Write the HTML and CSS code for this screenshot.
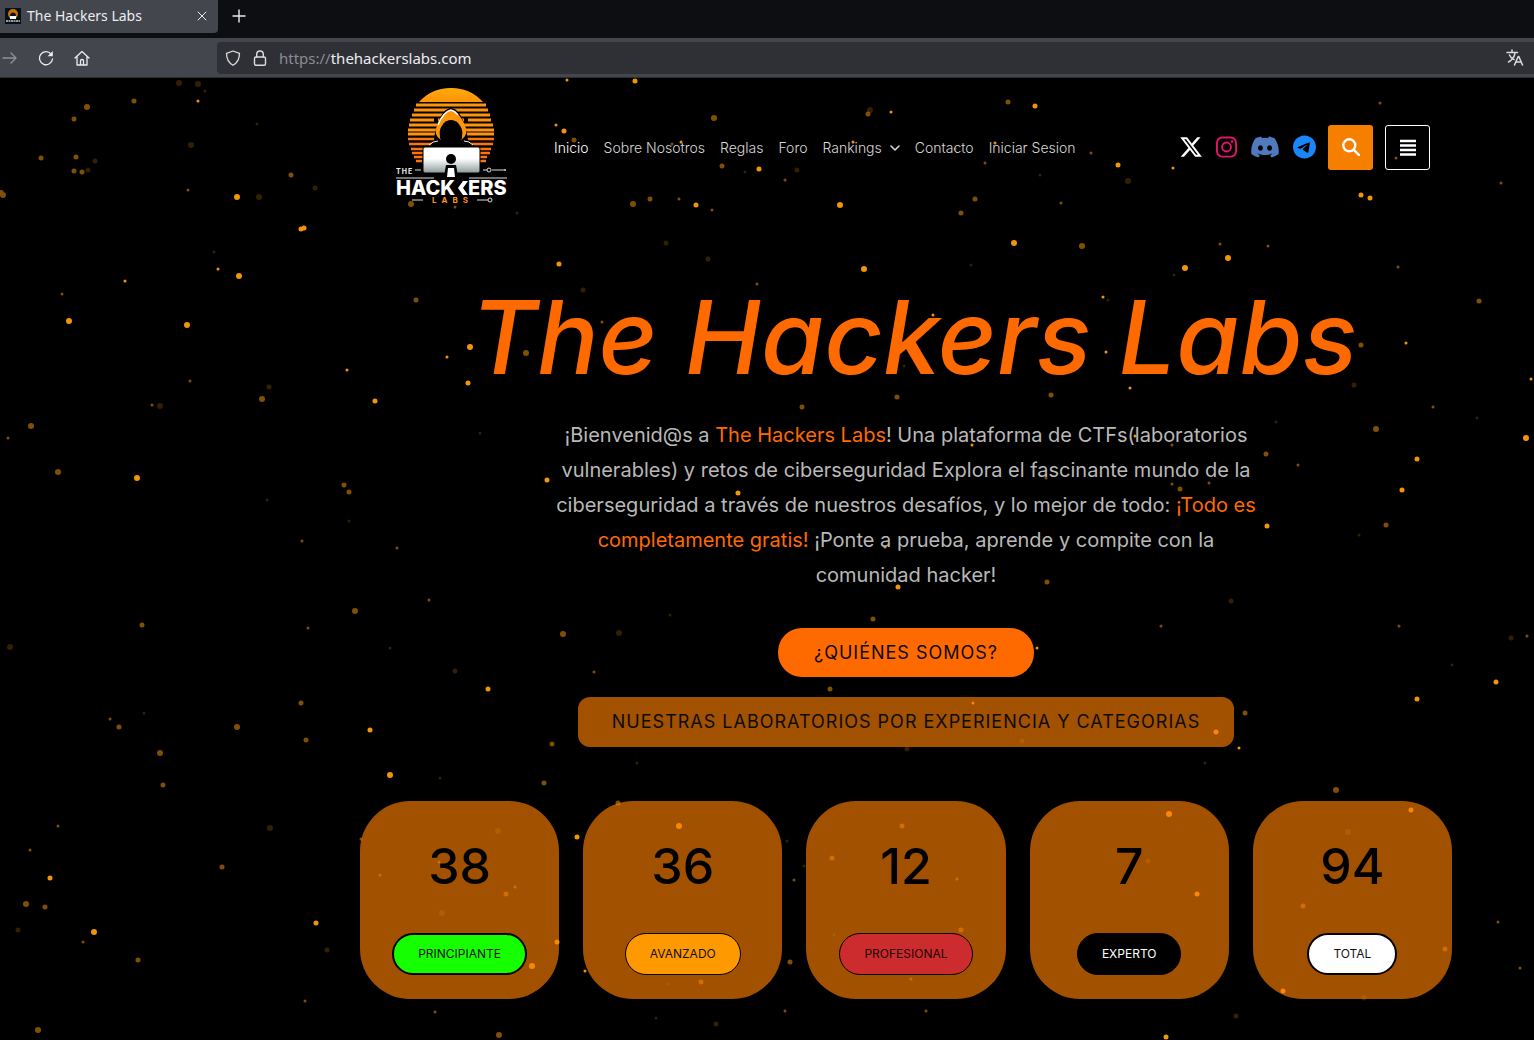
FILE: index.html
```html
<!DOCTYPE html>
<html lang="es">
<head>
<meta charset="utf-8">
<meta name="viewport" content="width=device-width, initial-scale=1">
<title>The Hackers Labs</title>
<link rel="stylesheet" href="styles.css">
</head>
<body>
<svg width="0" height="0" class="defs" aria-hidden="true">
  <defs>
    <linearGradient id="sun" x1="0" y1="0" x2="0" y2="1"><stop offset="0" stop-color="#ffa90a"/><stop offset="1" stop-color="#ff9408"/></linearGradient>
    <linearGradient id="lid" x1="0" y1="0" x2="0" y2="1"><stop offset=".45" stop-color="#fff"/><stop offset="1" stop-color="#8d9a9a"/></linearGradient>
  </defs>
</svg>

<div class="browser">
  <div class="tabs">
    <div class="tab">
      <svg class="favicon" viewBox="0 0 16 16" aria-hidden="true"><rect width="16" height="16" fill="#05121b"/><circle cx="8" cy="6" r="5" fill="#c87300"/><path d="M5 8a3 3.500 0 0 1 6 0v3H5z" fill="#111"/><path d="M5 8h6v3H5z" fill="#fff"/><path d="M1 13h14" stroke="#999" stroke-width="2" stroke-dasharray="2 .5"/></svg>
      <span class="tab-title">The Hackers Labs</span>
      <button class="chrome-btn" aria-label="Cerrar pestaña"><svg width="10" height="10" viewBox="0 0 10 10" class="line"><path d="M1 1l8 8M9 1L1 9"/></svg></button>
    </div>
    <button class="chrome-btn new-tab" aria-label="Nueva pestaña"><svg width="14" height="14" viewBox="0 0 14 14" class="line"><path d="M7 1v12M1 7h12" stroke-width="1.4"/></svg></button>
  </div>
  <div class="toolbar">
    <div class="tools">
      <button class="chrome-btn off" aria-label="Adelante"><svg width="16" height="16" viewBox="0 0 16 16" class="line"><path d="M1 8h13M9 3l5 5-5 5" stroke-width="1.4"/></svg></button>
      <button class="chrome-btn" aria-label="Recargar"><svg width="16" height="16" viewBox="0 0 16 16" class="line"><path d="M13 4A6.500 6.500 0 1 0 14.500 9" stroke-width="1.3"/><path d="M14.800 1v5.200H9.600z" fill="currentColor" stroke="none"/></svg></button>
      <button class="chrome-btn" aria-label="Inicio"><svg width="16" height="16" viewBox="0 0 16 16" class="line"><path d="M1 8l7-6.500L15 8M3 6.500V15h10V6.500M6.500 15v-4q0-1.500 1.500-1.500T9.500 11v4" stroke-width="1.3"/></svg></button>
    </div>
    <div class="address">
      <svg width="16" height="16" viewBox="0 0 16 16" class="line" aria-hidden="true"><path d="M8 1l6.500 2.300c0 5.500-1.500 9.200-6.500 12C3 12.500 1.500 8.800 1.500 3.300z" stroke-width="1.3"/></svg>
      <svg width="16" height="16" viewBox="0 0 16 16" class="line" aria-hidden="true"><rect x="2.500" y="7" width="11" height="8.300" rx="1.500" stroke-width="1.4"/><path d="M4.700 7V4.300a3.300 3.300 0 0 1 6.600 0V7" stroke-width="1.4"/></svg>
      <div class="url" role="textbox" aria-label="Dirección"><span class="scheme">https://</span>thehackerslabs.com</div>
      <button class="chrome-btn" aria-label="Traducir"><svg width="18" height="18" viewBox="0 0 18 18" class="line"><path d="M1 3.500h10.500M6 1v2.500M2.500 13C6 11 8.700 8 9 3.500M3.500 6C4.500 8.500 6 9.800 8 10.500M8.500 16l3.700-8.500h.6L16.500 16M10 13h5" stroke-width="1.5"/></svg></button>
    </div>
  </div>
</div>

<div class="page">
  <svg class="particles" viewBox="0 78 1534 962" aria-hidden="true">
    <path class="s dim" d="M205 91h0M257 124h0M214 252h0M480 433h0M267 500h0M349 521h0M144 713h0M390 648h0M440 778h0M637 763h0M1205 763h0M670 615h0M745 172h0M1040 175h0M1174 275h0M1108 300h0M1276 422h0M1477 418h0M1359 535h0M1452 665h0M787 841h0M804 866h0M834 935h0M668 984h0M517 213h0M971 265h0M904 366h0M656 1018h0"/>
    <path class="s mid" d="M188 190h0M62 294h0M152 405h0M8 438h0M302 541h0M397 548h0M308 628h0M58 826h0M110 719h0M30 850h0M83 942h0M305 1001h0M435 1012h0M190 381h0M429 600h0M594 672h0M1161 626h0M1061 203h0M1501 183h0M1398 267h0M1220 244h0M1268 246h0M1433 407h0M1172 445h0M1298 465h0M1209 483h0M1172 484h0M1046 478h0M1399 626h0M1527 636h0M380 875h0M515 887h0M957 879h0M794 880h0M911 979h0M785 1011h0M926 1011h0M757 284h0M602 322h0M672 144h0M1091 153h0M985 163h0M785 180h0M712 210h0M1380 103h0M955 149h0M1520 968h0M1498 922h0M1396 158h0M679 199h0M361 839h0M439 862h0M455 207h0"/>
    <path class="s hi" d="M567 80h0M556 125h0M681 142h0M853 142h0M995 143h0M891 112h0M218 269h0M125 281h0M198 101h0M347 370h0M933 315h0M1103 297h0M1106 352h0M1406 343h0M1130 388h0M1531 379h0M972 445h0M1135 436h0M1037 648h0M1239 748h0M973 703h0M585 971h0M885 547h0M447 357h0M1173 168h0"/>
    <path class="m dim" d="M95 161h0M88 170h0M315 188h0M269 387h0M455 671h0M327 950h0M666 243h0M708 259h0M797 170h0M583 290h0M1354 385h0M1511 638h0M1231 601h0M907 749h0M1022 741h0M1364 998h0M1148 861h0M716 1024h0M18 930h0M1236 1016h0"/>
    <path class="m mid" d="M74 119h0M134 101h0M41 158h0M76 157h0M82 172h0M74 171h0M291 175h0M349 492h0M344 485h0M142 625h0M301 703h0M163 785h0M222 867h0M45 907h0M138 960h0M119 727h0M574 140h0M722 166h0M650 199h0M961 213h0M975 199h0M897 397h0M802 407h0M1051 395h0M416 300h0M1479 301h0M1386 525h0M873 619h0M1047 582h0M1245 713h0M830 689h0M544 783h0M552 744h0M618 803h0M701 982h0M506 894h0M832 858h0M902 826h0M1303 906h0M1445 949h0M961 930h0M790 962h0M1266 454h0M1180 489h0M1361 345h0M868 114h0M1008 102h0M306 740h0"/>
    <path class="m hi" d="M301 229h0M304 228h0M564 131h0M759 169h0M635 81h0M696 205h0M559 264h0M1035 106h0M1361 195h0M1370 198h0M1417 459h0M1402 490h0M1267 526h0M1417 699h0M1496 682h0M375 401h0M468 383h0M488 689h0M370 730h0M50 878h0M316 923h0M577 837h0M557 942h0M1216 732h0M738 493h0M547 480h0M898 587h0M1411 810h0M1197 894h0M1283 991h0M1118 165h0M1166 1037h0"/>
    <path class="l dim" d="M179 83h0M198 84h0M191 145h0M259 197h0M160 406h0M270 828h0M10 647h0M619 633h0M498 831h0M1348 832h0M442 913h0M1128 181h0M870 110h0"/>
    <path class="l mid" d="M87 107h0M1 193h0M3 195h0M31 426h0M58 472h0M262 399h0M160 753h0M237 727h0M26 904h0M38 1030h0M355 611h0M563 634h0M499 1035h0M714 118h0M1082 246h0M1376 429h0M1336 790h0M526 353h0M633 204h0M411 204h0"/>
    <path class="l hi" d="M237 197h0M239 276h0M69 321h0M187 325h0M137 478h0M470 347h0M390 775h0M94 932h0M840 205h0M864 269h0M1014 243h0M1185 268h0M1228 258h0M1526 438h0M679 826h0M532 966h0M1169 814h0"/>
  </svg>

  <header class="site-header">
    <a class="logo" href="#" aria-label="The Hackers Labs">
      <svg width="112" height="120" viewBox="0 0 112 120">
        <path fill="url(#sun)" d="M55 0A43 43 0 0 1 87 14H23A43 43 0 0 1 55 0z"/>
        <path d="M20 17h70M18 22h74M16 27h78M14 32h24M42 32h26M72 32h23M13 37h84M12 42h86M12 46h86" stroke="#ff930b" stroke-width="3"/>
        <path d="M12 51h86M13 56h84M15 61h18M77 61h18M16 65h16M79 65h15M18 69h10M83 69h8M20 73h6M84 73h6" stroke="#ff740a" stroke-width="2.500"/>
        <path d="M31 61l7-8h35l8 8v8H31z"/>
        <path d="M38 52C40 35 47 20 55 20s15 15 17 32l4 8H34z"/>
        <path d="M45 52q-8-5-4-15Q47 24 55 22q8 2 14 15 4 10-4 15 3-10-1-14-9-11-18 0-4 4-1 14z" fill="#ff950b"/>
        <path d="M42 37Q47 24 55 22q4 1 7 5" fill="none" stroke="#fff" stroke-width="1.500"/>
        <path d="M55 32c-8 0-12 9-11 18l4 6h14l4-6c1-9-3-18-11-18z"/>
        <path d="M33 57q4-4 9-4M77 57q-4-4-9-4" fill="none" stroke="#eee" stroke-width="1"/>
        <rect x="27" y="59" width="57" height="26" rx="2" fill="url(#lid)" stroke="#000"/>
        <circle cx="55" cy="71" r="5"/><path d="M48 88l2-11h10l2 11z"/><path d="M51 89l1-9h6l1 9z" fill="#fff"/>
        <path d="M19 82h6M87 82h4M96 82h12M0 90h38M73 90h38M16 112h11M81 112h11" stroke="#ddd"/>
        <circle cx="93" cy="82" r="2" fill="none" stroke="#ddd"/><circle cx="109" cy="82" r="1" fill="#ddd"/><circle cx="94" cy="112" r="2" fill="none" stroke="#ddd"/>
        <text class="logo-the" x="0" y="86">THE</text>
        <text class="logo-name" x="0" y="107">HACK</text>
        <path d="M72 93h-5l-5 7 5 7h5l-5-7z" fill="#fff"/>
        <text class="logo-name" x="72" y="107">ERS</text>
        <text class="logo-labs" x="36" y="115">LABS</text>
      </svg>
    </a>
    <nav class="nav" aria-label="Principal">
      <a href="#" class="active">Inicio</a>
      <a href="#">Sobre Nosotros</a>
      <a href="#">Reglas</a>
      <a href="#">Foro</a>
      <a href="#">Rankings<svg width="10" height="6" viewBox="0 0 10 6" class="line"><path d="M1 1l4 4 4-4" stroke-width="1.6"/></svg></a>
      <a href="#">Contacto</a>
      <a href="#">Iniciar Sesion</a>
    </nav>
    <div class="actions">
      <div class="socials">
        <a class="x" href="#" aria-label="X"><svg width="24" height="24" viewBox="0 0 512 512"><path d="M389.200 48h70.600L305.600 224.200 487 464H345L233.700 318.600 106.500 464H35.800L200.700 275.500 26.800 48H172.400L272.900 180.900 389.200 48zM364.400 421.800h39.100L151.100 88h-42L364.400 421.800z"/></svg></a>
        <a class="instagram" href="#" aria-label="Instagram"><svg width="21" height="24" viewBox="0 0 448 512"><g fill="none" stroke="currentColor" stroke-width="40"><rect x="20" y="52" width="408" height="408" rx="112"/><circle cx="224" cy="256" r="95"/></g><circle cx="343" cy="137" r="27"/></svg></a>
        <a class="discord" href="#" aria-label="Discord"><svg width="30" height="24" viewBox="0 0 640 512"><path d="M524.531,69.836a1.500,1.500,0,0,0-.764-.7A485.065,485.065,0,0,0,404.081,32.030a1.816,1.816,0,0,0-1.923.910,337.461,337.461,0,0,0-14.900,30.600,447.848,447.848,0,0,0-134.426,0,309.541,309.541,0,0,0-15.135-30.600,1.890,1.890,0,0,0-1.924-.910A483.689,483.689,0,0,0,116.085,69.137a1.712,1.712,0,0,0-.788.676C39.068,183.651,18.186,294.690,28.430,404.354a2.016,2.016,0,0,0,.765,1.375A487.666,487.666,0,0,0,176.020,479.918a1.900,1.900,0,0,0,2.063-.676A348.200,348.200,0,0,0,208.120,430.400a1.860,1.860,0,0,0-1.019-2.588,321.173,321.173,0,0,1-45.868-21.853,1.885,1.885,0,0,1-.185-3.126c3.082-2.309,6.166-4.711,9.109-7.137a1.819,1.819,0,0,1,1.900-.256c96.229,43.917,200.410,43.917,295.500,0a1.812,1.812,0,0,1,1.924.233c2.944,2.426,6.027,4.851,9.132,7.160a1.884,1.884,0,0,1-.162,3.126,301.407,301.407,0,0,1-45.890,21.830,1.875,1.875,0,0,0-1,2.611,391.055,391.055,0,0,0,30.014,48.815,1.864,1.864,0,0,0,2.063.7A486.048,486.048,0,0,0,610.700,405.729a1.882,1.882,0,0,0,.765-1.352C623.729,277.594,590.933,167.465,524.531,69.836ZM222.491,337.580c-28.972,0-52.844-26.587-52.844-59.239S193.056,219.100,222.491,219.100c29.665,0,53.306,26.820,52.843,59.239C275.334,310.993,251.924,337.580,222.491,337.580Zm195.380,0c-28.971,0-52.843-26.587-52.843-59.239S388.437,219.100,417.871,219.100c29.667,0,53.307,26.820,52.844,59.239C470.715,310.993,447.538,337.580,417.871,337.580Z"/></svg></a>
        <a class="telegram" href="#" aria-label="Telegram"><svg width="23" height="24" viewBox="0 0 496 512"><path d="M248,8C111.033,8,0,119.033,0,256S111.033,504,248,504,496,392.967,496,256,384.967,8,248,8ZM362.952,176.660c-3.732,39.215-19.881,134.378-28.100,178.300-3.476,18.584-10.322,24.816-16.948,25.425-14.400,1.326-25.338-9.517-39.287-18.661-21.827-14.308-34.158-23.215-55.346-37.177-24.485-16.135-8.612-25,5.342-39.500,3.652-3.793,67.107-61.510,68.335-66.746.153-.655.3-3.100-1.154-4.384s-3.590-.849-5.135-.5q-3.283.746-104.608,69.142-14.845,10.194-26.894,9.934c-8.855-.191-25.888-5.006-38.551-9.123-15.531-5.048-27.875-7.717-26.800-16.291q.84-6.700,18.450-13.700,108.446-47.248,144.628-62.300c68.872-28.647,83.183-33.623,92.511-33.789,2.052-.034,6.639.474,9.610,2.885a10.452,10.452,0,0,1,3.530,6.716A43.765,43.765,0,0,1,362.952,176.660Z"/></svg></a>
      </div>
      <button class="square search" aria-label="Buscar"><svg width="18" height="18" viewBox="0 0 18 18"><g fill="none" stroke="currentColor" stroke-width="2.400" stroke-linecap="round"><circle cx="7.300" cy="7.300" r="6"/><path d="M11.800 11.800l5 5"/></g></svg></button>
      <button class="square menu" aria-label="Menú"><svg width="16" height="17" viewBox="0 0 16 17"><path d="M0 2h16M0 6.500h16M0 11h16M0 15.500h16" stroke="currentColor" stroke-width="2.400"/></svg></button>
    </div>
  </header>

  <main class="hero">
    <h1>The Hackers Labs</h1>
    <p class="intro">¡Bienvenid@s a <strong>The Hackers Labs</strong>! Una plataforma de CTFs(laboratorios vulnerables) y retos de ciberseguridad Explora el fascinante mundo de la ciberseguridad a través de nuestros desafíos, y lo mejor de todo: <strong>¡Todo es completamente gratis!</strong> ¡Ponte a prueba, aprende y compite con la comunidad hacker!</p>
    <a class="cta about" href="#">¿QUIÉNES SOMOS?</a>
    <a class="cta labs" href="#">NUESTRAS LABORATORIOS POR EXPERIENCIA Y CATEGORIAS</a>
    <section class="levels" aria-label="Laboratorios por nivel">
      <article class="level"><span class="count">38</span><a class="pill beginner" href="#">PRINCIPIANTE</a></article>
      <article class="level"><span class="count">36</span><a class="pill advanced" href="#">AVANZADO</a></article>
      <article class="level"><span class="count">12</span><a class="pill pro" href="#">PROFESIONAL</a></article>
      <article class="level"><span class="count">7</span><a class="pill expert" href="#">EXPERTO</a></article>
      <article class="level"><span class="count">94</span><a class="pill total" href="#">TOTAL</a></article>
    </section>
  </main>
</div>
</body>
</html>
```

FILE: styles.css
```css
* { box-sizing: border-box; }

body {
  margin: 0;
  min-height: 100vh;
  display: flex;
  flex-direction: column;
  background: #000;
  color: #fff;
  font-family: Inter, "Liberation Sans", sans-serif;
}

a { color: inherit; text-decoration: none; }
button { padding: 0; border: 0; background: none; color: inherit; font: inherit; }
svg { display: block; flex: none; fill: currentColor; }
.defs { position: absolute; }
.line { fill: none; stroke: currentColor; stroke-linecap: round; stroke-linejoin: round; }

/* Browser chrome */
.browser { color: #ececf0; font-family: "Noto Sans", sans-serif; }
.tabs { display: flex; align-items: flex-start; height: 38px; background: #0c0e12; }
.tab {
  display: flex;
  align-items: center;
  gap: 6px;
  width: 218px;
  height: 33px;
  padding: 0 11px 2px 5px;
  border-radius: 0 0 4px 0;
  background: #43464d;
  font-size: 14px;
}
.favicon { width: 16px; height: 16px; }
.tab-title { flex: 1; }
.chrome-btn { display: grid; place-items: center; }
.new-tab { width: 42px; height: 31px; }
.toolbar { display: flex; align-items: center; height: 40px; background: #43464d; border-bottom: 1px solid #2a2c31; }
.tools { display: flex; gap: 20px; width: 217px; padding-left: 2px; }
.off { opacity: .45; }
.address {
  flex: 1;
  display: flex;
  align-items: center;
  gap: 11px;
  height: 32px;
  padding: 0 10px 0 8px;
  border-radius: 4px 0 0 4px;
  background: #2f3036;
}
.url { flex: 1; font-size: 15px; }
.address .line { color: #dcdce0; }
.scheme { color: #8b8c92; }

/* Page */
.page { position: relative; flex: 1; padding-left: 278px; overflow: hidden; }
.particles {
  position: absolute;
  top: 0;
  left: 0;
  width: 100%;
  fill: none;
  stroke: #ff9d0a;
  stroke-linecap: round;
}
.s { stroke-width: 3px; }
.m { stroke-width: 5px; }
.l { stroke-width: 6px; }
.dim { stroke-opacity: .2; }
.mid { stroke-opacity: .5; }
.hi { stroke-opacity: .95; }

.site-header {
  position: relative;
  display: flex;
  align-items: center;
  max-width: 1048px;
  height: 138px;
  margin: 0 auto;
  padding-left: 14px;
}
.logo { margin-top: 2px; }
.logo svg { fill: #000; }
.logo-the { font-size: 7px; font-weight: 700; letter-spacing: 1px; fill: #eee; }
.logo-name { font-size: 20px; font-weight: 800; fill: #fff; }
.logo-labs { font-size: 8px; font-weight: 700; letter-spacing: 5px; fill: #f7931e; }

.nav {
  display: flex;
  gap: 15px;
  margin: 2px 0 0 46px;
  color: #d8d8d8;
  font-size: 14px;
  font-weight: 300;
  line-height: 20px;
  white-space: nowrap;
}
.nav a { display: flex; align-items: center; gap: 8px; }
.nav .active { color: #fff; }

.actions { display: flex; align-items: center; gap: 12px; margin-left: auto; }
.socials { display: flex; gap: 13px; }
.x { color: #fff; }
.instagram { color: #e4156b; }
.discord { color: #5179bd; }
.telegram { color: #1a86fb; }
.square { display: grid; place-items: center; width: 45px; height: 45px; border-radius: 3px; }
.search { background: #f77f00; }
.menu { border: 1px solid #fff; }

.hero {
  position: relative;
  display: flex;
  flex-direction: column;
  align-items: center;
  max-width: 1092px;
  margin: 0 auto;
  padding: 56px 0 40px;
}
h1 {
  margin: 0;
  padding-left: 16px;
  color: #ff6a00;
  font-size: 102px;
  font-style: italic;
  font-weight: 500;
  line-height: 130px;
  white-space: nowrap;
}
.intro {
  max-width: 704px;
  margin: 16px 0 35px;
  color: #b9b9b9;
  font-size: 20px;
  line-height: 35px;
  text-align: center;
}
.intro strong { color: #ff6a00; font-weight: 400; }

.cta {
  padding: 0 36px;
  color: #0c0c0c;
  font-size: 18px;
  line-height: 49px;
  letter-spacing: 1px;
}
.about { margin-bottom: 20px; border-radius: 24px; background: #ff6a00; }
.labs { padding: 0 34px; border-radius: 12px; background: rgba(255, 128, 0, .635); line-height: 50px; }

.levels {
  display: grid;
  grid-template-columns: repeat(5, 1fr);
  gap: 24px;
  width: 100%;
  margin-top: 54px;
}
.level {
  display: flex;
  flex-direction: column;
  align-items: center;
  gap: 38px;
  padding: 36px 0 24px;
  border-radius: 50px;
  background: rgba(255, 128, 0, .635);
}
.count { color: #000; font-size: 50px; font-weight: 500; line-height: 58px; }
.pill {
  padding: 0 24px;
  border: 1px solid #000;
  border-radius: 21px;
  color: #111;
  font-size: 12px;
  line-height: 40px;
}
.beginner { background: #15ff00; border-width: 2px; line-height: 38px; }
.advanced { background: #ff9900; }
.pro { background: #cd2c2f; color: #1c0505; }
.expert { background: #000; color: #fff; }
.total { background: #fff; border-width: 2px; line-height: 38px; }
```
